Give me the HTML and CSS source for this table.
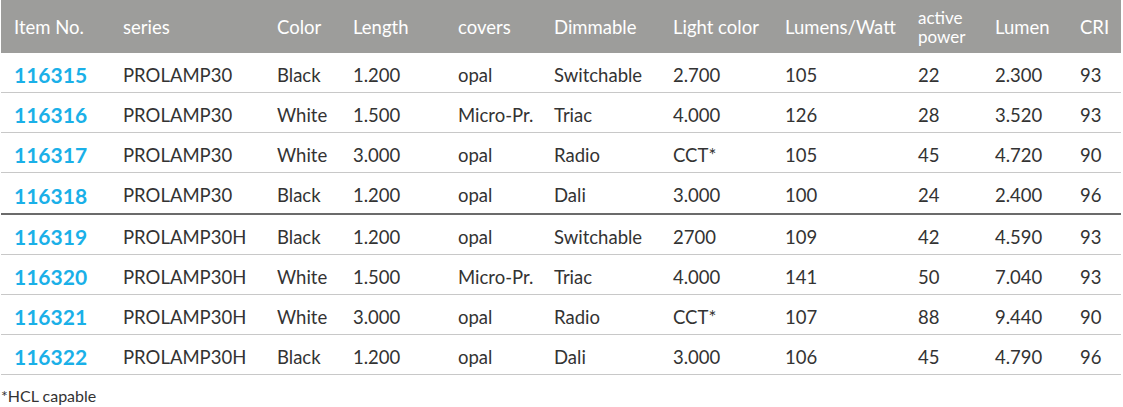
FILE: index.html
```html
<!DOCTYPE html>
<html>
<head>
<meta charset="utf-8">
<link rel="stylesheet" href="styles.css">
</head>
<body>
<table class="spec">
<colgroup>
<col class="c1"><col class="c2"><col class="c3"><col class="c4"><col class="c5"><col class="c6"><col class="c7"><col class="c8"><col class="c9"><col class="c10"><col class="c11">
</colgroup>
<thead>
<tr><th>Item No.</th><th>series</th><th>Color</th><th>Length</th><th>covers</th><th>Dimmable</th><th>Light color</th><th>Lumens/Watt</th><th class="two"><span class="ln">active</span><span class="ln">power</span></th><th>Lumen</th><th>CRI</th></tr>
</thead>
<tbody>
<tr><td class="id">116315</td><td>PROLAMP30</td><td>Black</td><td>1.200</td><td>opal</td><td>Switchable</td><td>2.700</td><td>105</td><td>22</td><td>2.300</td><td>93</td></tr>
<tr><td class="id">116316</td><td>PROLAMP30</td><td>White</td><td>1.500</td><td>Micro-Pr.</td><td>Triac</td><td>4.000</td><td>126</td><td>28</td><td>3.520</td><td>93</td></tr>
<tr><td class="id">116317</td><td>PROLAMP30</td><td>White</td><td>3.000</td><td>opal</td><td>Radio</td><td>CCT*</td><td>105</td><td>45</td><td>4.720</td><td>90</td></tr>
<tr class="group-end"><td class="id">116318</td><td>PROLAMP30</td><td>Black</td><td>1.200</td><td>opal</td><td>Dali</td><td>3.000</td><td>100</td><td>24</td><td>2.400</td><td>96</td></tr>
<tr><td class="id">116319</td><td>PROLAMP30H</td><td>Black</td><td>1.200</td><td>opal</td><td>Switchable</td><td>2700</td><td>109</td><td>42</td><td>4.590</td><td>93</td></tr>
<tr><td class="id">116320</td><td>PROLAMP30H</td><td>White</td><td>1.500</td><td>Micro-Pr.</td><td>Triac</td><td>4.000</td><td>141</td><td>50</td><td>7.040</td><td>93</td></tr>
<tr><td class="id">116321</td><td>PROLAMP30H</td><td>White</td><td>3.000</td><td>opal</td><td>Radio</td><td>CCT*</td><td>107</td><td>88</td><td>9.440</td><td>90</td></tr>
<tr><td class="id">116322</td><td>PROLAMP30H</td><td>Black</td><td>1.200</td><td>opal</td><td>Dali</td><td>3.000</td><td>106</td><td>45</td><td>4.790</td><td>96</td></tr>
</tbody>
</table>
<p class="note">*HCL capable</p>
</body>
</html>
```
FILE: styles.css
```css
html, body {
  margin: 0;
  padding: 0;
  background: #ffffff;
}
body {
  padding: 0 0 0 1px;
  font-family: Lato, "Noto Sans", sans-serif;
  color: #333333;
}
.spec {
  border-collapse: collapse;
  table-layout: fixed;
  width: 1120px;
}
.c1 { width: 109px; }
.c2 { width: 154px; }
.c3 { width: 76px; }
.c4 { width: 105px; }
.c5 { width: 96px; }
.c6 { width: 119px; }
.c7 { width: 112px; }
.c8 { width: 133px; }
.c9 { width: 77px; }
.c10 { width: 85px; }
.c11 { width: 54px; }
.spec th {
  background: #9d9d9b;
  color: #ffffff;
  font-weight: 400;
  font-size: 18.5px;
  text-align: left;
  padding: 0 0 0 13px;
  height: 53px;
  vertical-align: middle;
  line-height: 20px;
  white-space: nowrap;
}
.spec th.two {
  font-size: 17px;
  line-height: 19px;
}
.ln {
  display: block;
}
.spec td {
  font-size: 18.5px;
  padding: 4px 0 0 13px;
  height: 35px;
  border-bottom: 1px solid #c8c8c8;
  vertical-align: middle;
  white-space: nowrap;
}
.spec td.id {
  color: #1ab0e8;
  font-weight: 700;
  font-size: 21px;
}
.spec tr.group-end td {
  border-bottom: 2px solid #6b6b6b;
  height: 36px;
}
.note {
  margin: 11px 0 0 0;
  font-size: 16px;
  color: #333333;
}
```
